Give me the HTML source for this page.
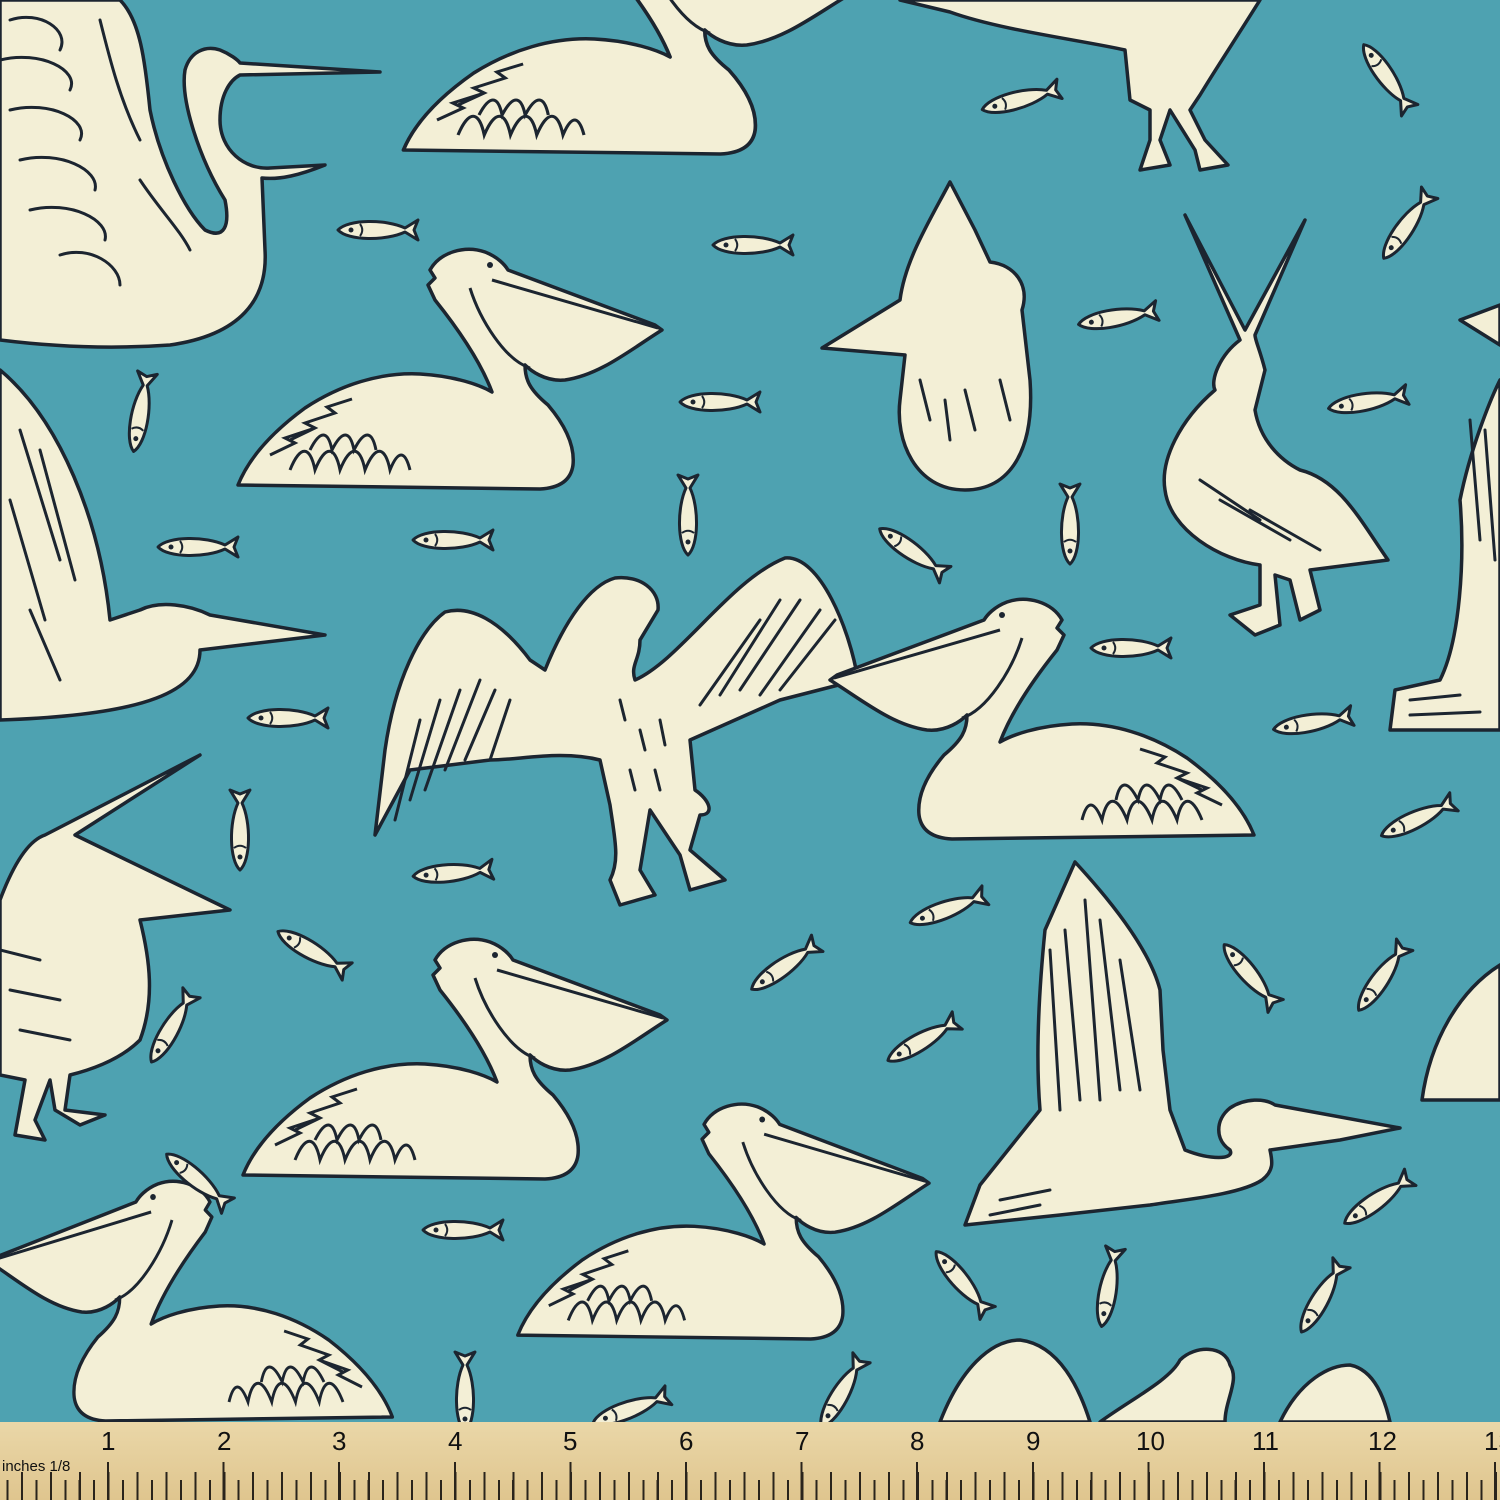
<!DOCTYPE html>
<html><head><meta charset="utf-8"><style>
html,body{margin:0;padding:0;width:1500px;height:1500px;overflow:hidden;background:#4ea2b1}
svg{position:absolute;left:0;top:0}
.ruler{position:absolute;left:0;top:1422px;width:1500px;height:78px;background:#e4cc98;
background-image:linear-gradient(180deg,#ead7a8,#dfc58e);}
.ticks{position:absolute;left:0;bottom:0;width:1500px;height:20px;
background:repeating-linear-gradient(90deg,#2a241c 0 2px,transparent 2px 14.45px);background-position:6.5px 0}
.t4{position:absolute;left:0;bottom:0;width:1500px;height:28px;
background:repeating-linear-gradient(90deg,#2a241c 0 2px,transparent 2px 28.9px);background-position:21px 0}
.t1{position:absolute;left:0;bottom:0;width:1500px;height:38px;
background:repeating-linear-gradient(90deg,#2a241c 0 2px,transparent 2px 115.6px);background-position:107px 0}
.n{position:absolute;top:4px;font:26px "Liberation Sans",sans-serif;color:#111}
.lab{position:absolute;left:2px;top:36px;font:15px "Liberation Sans",sans-serif;color:#111}
</style></head><body>
<svg width="1500" height="1500" viewBox="0 0 1500 1500">
<defs>
<g id="swim">
<path d="M8,245 C20,215 45,190 75,168 C110,145 150,132 190,134 C225,136 250,145 262,152 C250,120 225,85 205,60 L198,45 L205,38 L200,30 C210,12 235,5 255,12 C268,17 275,25 278,30 L425,85 L432,90 C400,110 370,135 335,140 C315,142 300,130 295,125 C295,140 300,150 318,165 C335,185 345,205 343,225 C341,240 330,248 310,249 Z" fill="#f3efd6" stroke="#1c2530" stroke-width="3.5" stroke-linejoin="round"/>
<path d="M262,40 L428,88 M240,48 C250,80 275,120 300,128 M40,215 l25,-12 l-10,-5 l30,-10 M60,200 l25,-12 l-10,-5 l30,-10 l-8,-6 l25,-8 M60,230 c10,-25 20,-25 25,0 c10,-25 20,-25 25,0 c10,-25 20,-25 25,0 c10,-25 20,-25 25,0 c8,-20 15,-20 20,0 M80,210 c10,-20 18,-20 22,0 c10,-20 18,-20 22,0 c10,-20 18,-20 22,0" fill="none" stroke="#1c2530" stroke-width="3"/>
<circle cx="260" cy="25" r="3" fill="#1c2530"/>
</g>
<g id="fish">
<path d="M-37,0 C-27,-11 11,-11 30,-2 L43,-10 L39,0 L43,10 L30,2 C11,11 -27,11 -37,0 Z" fill="#f3efd6" stroke="#1c2530" stroke-width="3" stroke-linejoin="round"/>
<circle cx="-24" cy="0" r="2.5" fill="#1c2530"/><path d="M-15,-6 C-12,-2 -12,2 -15,6" fill="none" stroke="#1c2530" stroke-width="2"/>
</g>
</defs>
<g fill="#f3efd6" stroke="#1c2530" stroke-width="3.5" stroke-linejoin="round">
<path d="M0,0 L120,0 C140,20 145,60 150,110 C160,160 185,210 205,230 C225,240 230,225 225,200 C200,160 180,100 185,70 C190,52 205,45 220,50 C230,54 238,60 240,63 L380,72 L240,75 C230,80 220,95 220,120 C220,150 245,170 270,168 L325,165 C300,175 280,180 262,178 L265,250 C268,300 240,335 170,345 C100,350 40,345 0,340 Z"/>
<path d="M900,0 L1260,0 C1235,40 1215,70 1200,95 L1190,110 L1205,140 L1228,165 L1200,170 L1195,150 L1170,110 L1160,140 L1170,165 L1140,170 L1150,140 L1150,110 L1130,100 L1125,50 C1080,40 1000,30 950,12 Z"/>
<path d="M950,182 L975,230 L990,262 C1015,265 1030,285 1022,310 L1030,380 C1035,450 1010,490 965,490 C915,490 895,440 900,400 L905,355 L822,348 L900,300 C905,260 930,220 950,182 Z"/>
<path d="M1185,215 L1240,340 C1220,355 1210,380 1215,390 C1180,420 1160,460 1165,490 C1170,530 1220,560 1260,565 L1260,605 L1230,615 L1255,635 L1280,625 L1275,575 L1290,580 L1300,620 L1320,610 L1310,570 L1388,560 C1360,520 1340,480 1300,470 C1280,460 1260,440 1255,410 L1265,370 C1260,350 1255,340 1255,335 L1305,220 L1245,330 Z"/>
<path d="M0,370 C60,420 100,520 110,620 L140,610 C160,600 190,605 210,615 L325,635 L200,650 C200,690 150,715 0,720 Z"/>
<path d="M375,835 L385,750 C395,680 420,630 445,612 C470,605 500,620 530,660 L545,670 C565,620 590,585 615,578 C640,575 660,590 658,610 L640,640 C640,660 630,665 635,680 C680,660 730,580 785,558 C820,555 850,630 858,680 L780,700 L690,740 L695,790 C710,800 715,815 700,815 L690,850 L725,880 L690,890 L680,855 L650,810 L640,870 L655,895 L620,905 L610,880 C620,860 615,840 610,805 L600,760 C560,750 520,760 490,760 L410,770 Z"/>
<path d="M1500,380 L1500,730 L1390,730 L1395,690 L1440,680 C1460,640 1465,560 1460,500 C1470,450 1490,400 1500,380 Z"/>
<path d="M1500,305 L1460,320 L1500,345 Z"/>
<path d="M0,900 C15,860 30,840 45,835 L200,755 L75,835 L230,910 L140,920 C150,960 155,1000 140,1040 C120,1060 90,1070 70,1075 L65,1110 L105,1115 L80,1125 L55,1110 L50,1080 L35,1120 L45,1140 L15,1135 L25,1080 L0,1075 Z"/>
<path d="M965,1225 L980,1185 L1040,1110 C1035,1050 1040,980 1045,930 L1075,862 C1110,900 1150,950 1160,990 L1163,1050 L1170,1110 L1185,1150 C1210,1160 1235,1160 1230,1150 C1215,1140 1215,1120 1230,1108 C1245,1098 1265,1098 1275,1105 L1400,1128 L1340,1140 L1270,1150 C1272,1160 1275,1170 1262,1180 C1240,1195 1180,1200 1150,1205 L1060,1215 Z"/>
<path d="M940,1422 C960,1370 990,1340 1020,1340 C1060,1345 1080,1390 1090,1422 Z"/>
<path d="M1100,1422 C1130,1400 1170,1380 1180,1360 C1195,1345 1225,1345 1230,1365 C1240,1380 1225,1400 1225,1422 Z"/>
<path d="M1280,1422 C1300,1380 1330,1365 1350,1365 C1375,1370 1385,1400 1390,1422 Z"/>
<path d="M1500,965 L1500,1100 L1422,1100 C1430,1040 1460,990 1500,965 Z"/>
</g>
<g fill="none" stroke="#1c2530" stroke-width="3" stroke-linecap="round">
<path d="M10,20 C40,10 70,30 60,50 M0,60 C40,50 80,70 70,90 M10,110 C50,100 90,120 80,140 M20,160 C60,150 100,170 95,190 M30,210 C70,200 110,220 105,240 M60,255 C90,245 120,265 120,285 M100,20 C110,60 120,100 140,140 M140,180 C160,210 180,230 190,250"/>
<path d="M395,820 L420,720 M410,800 L440,700 M425,790 L460,690 M445,770 L480,680 M465,760 L495,690 M490,760 L510,700 M740,690 L800,600 M760,695 L820,610 M780,690 L835,620 M720,695 L780,600 M700,705 L760,620 M620,700 L625,720 M640,730 L645,750 M660,720 L665,745 M630,770 L635,790 M655,770 L660,790"/>
<path d="M1060,1110 L1050,950 M1080,1100 L1065,930 M1100,1100 L1085,900 M1120,1090 L1100,920 M1140,1090 L1120,960 M1000,1200 L1050,1190 M990,1215 L1040,1205"/>
<path d="M20,430 L60,560 M40,450 L75,580 M10,500 L45,620 M30,610 L60,680 M0,950 L40,960 M10,990 L60,1000 M20,1030 L70,1040"/>
<path d="M1470,420 L1480,540 M1485,430 L1495,560 M1410,700 L1460,695 M1410,715 L1480,712"/>
<path d="M920,380 L930,420 M945,400 L950,440 M965,390 L975,430 M1000,380 L1010,420 M1200,480 L1260,520 M1220,500 L1290,540 M1250,510 L1320,550"/>
</g>
<use href="#swim" transform="translate(230,240)"/>
<use href="#swim" transform="translate(395,-95) scale(1.05,1)"/>
<use href="#swim" transform="translate(1262,590) scale(-1,1)"/>
<use href="#swim" transform="translate(235,930)"/>
<use href="#swim" transform="translate(510,1095) scale(0.97,0.98)"/>
<use href="#swim" transform="translate(400,1172) scale(-0.95,1)"/>
<g>
<use href="#fish" transform="translate(375,230)"/>
<use href="#fish" transform="translate(750,245)"/>
<use href="#fish" transform="translate(1115,318) rotate(-10)"/>
<use href="#fish" transform="translate(1018,100) rotate(-15)"/>
<use href="#fish" transform="translate(1385,75) rotate(55)"/>
<use href="#fish" transform="translate(1405,228) rotate(-55)"/>
<use href="#fish" transform="translate(1365,402) rotate(-10)"/>
<use href="#fish" transform="translate(717,402)"/>
<use href="#fish" transform="translate(140,415) rotate(-80)"/>
<use href="#fish" transform="translate(195,547)"/>
<use href="#fish" transform="translate(450,540)"/>
<use href="#fish" transform="translate(688,518) rotate(-90)"/>
<use href="#fish" transform="translate(910,550) rotate(35)"/>
<use href="#fish" transform="translate(1070,527) rotate(-90)"/>
<use href="#fish" transform="translate(1128,648)"/>
<use href="#fish" transform="translate(285,718)"/>
<use href="#fish" transform="translate(1310,723) rotate(-10)"/>
<use href="#fish" transform="translate(1415,820) rotate(-25)"/>
<use href="#fish" transform="translate(240,833) rotate(-90)"/>
<use href="#fish" transform="translate(450,873) rotate(-5)"/>
<use href="#fish" transform="translate(945,910) rotate(-20)"/>
<use href="#fish" transform="translate(782,968) rotate(-35)"/>
<use href="#fish" transform="translate(310,950) rotate(30)"/>
<use href="#fish" transform="translate(1248,973) rotate(50)"/>
<use href="#fish" transform="translate(1380,980) rotate(-55)"/>
<use href="#fish" transform="translate(170,1030) rotate(-60)"/>
<use href="#fish" transform="translate(920,1042) rotate(-30)"/>
<use href="#fish" transform="translate(195,1178) rotate(40)"/>
<use href="#fish" transform="translate(460,1230)"/>
<use href="#fish" transform="translate(1375,1202) rotate(-35)"/>
<use href="#fish" transform="translate(960,1280) rotate(50)"/>
<use href="#fish" transform="translate(1108,1290) rotate(-80)"/>
<use href="#fish" transform="translate(1320,1300) rotate(-60)"/>
<use href="#fish" transform="translate(465,1395) rotate(-90)"/>
<use href="#fish" transform="translate(840,1395) rotate(-60)"/>
<use href="#fish" transform="translate(628,1410) rotate(-20)"/>
</g>
</svg>
<div class="ruler">
<div class="ticks"></div><div class="t4"></div><div class="t1"></div>
<div class="lab">inches 1/8</div>
<div class="n" style="left:101px">1</div><div class="n" style="left:217px">2</div><div class="n" style="left:332px">3</div><div class="n" style="left:448px">4</div><div class="n" style="left:563px">5</div><div class="n" style="left:679px">6</div><div class="n" style="left:795px">7</div><div class="n" style="left:910px">8</div><div class="n" style="left:1026px">9</div><div class="n" style="left:1136px">10</div><div class="n" style="left:1252px">11</div><div class="n" style="left:1368px">12</div><div class="n" style="left:1484px">13</div>
</div>
</body></html>
